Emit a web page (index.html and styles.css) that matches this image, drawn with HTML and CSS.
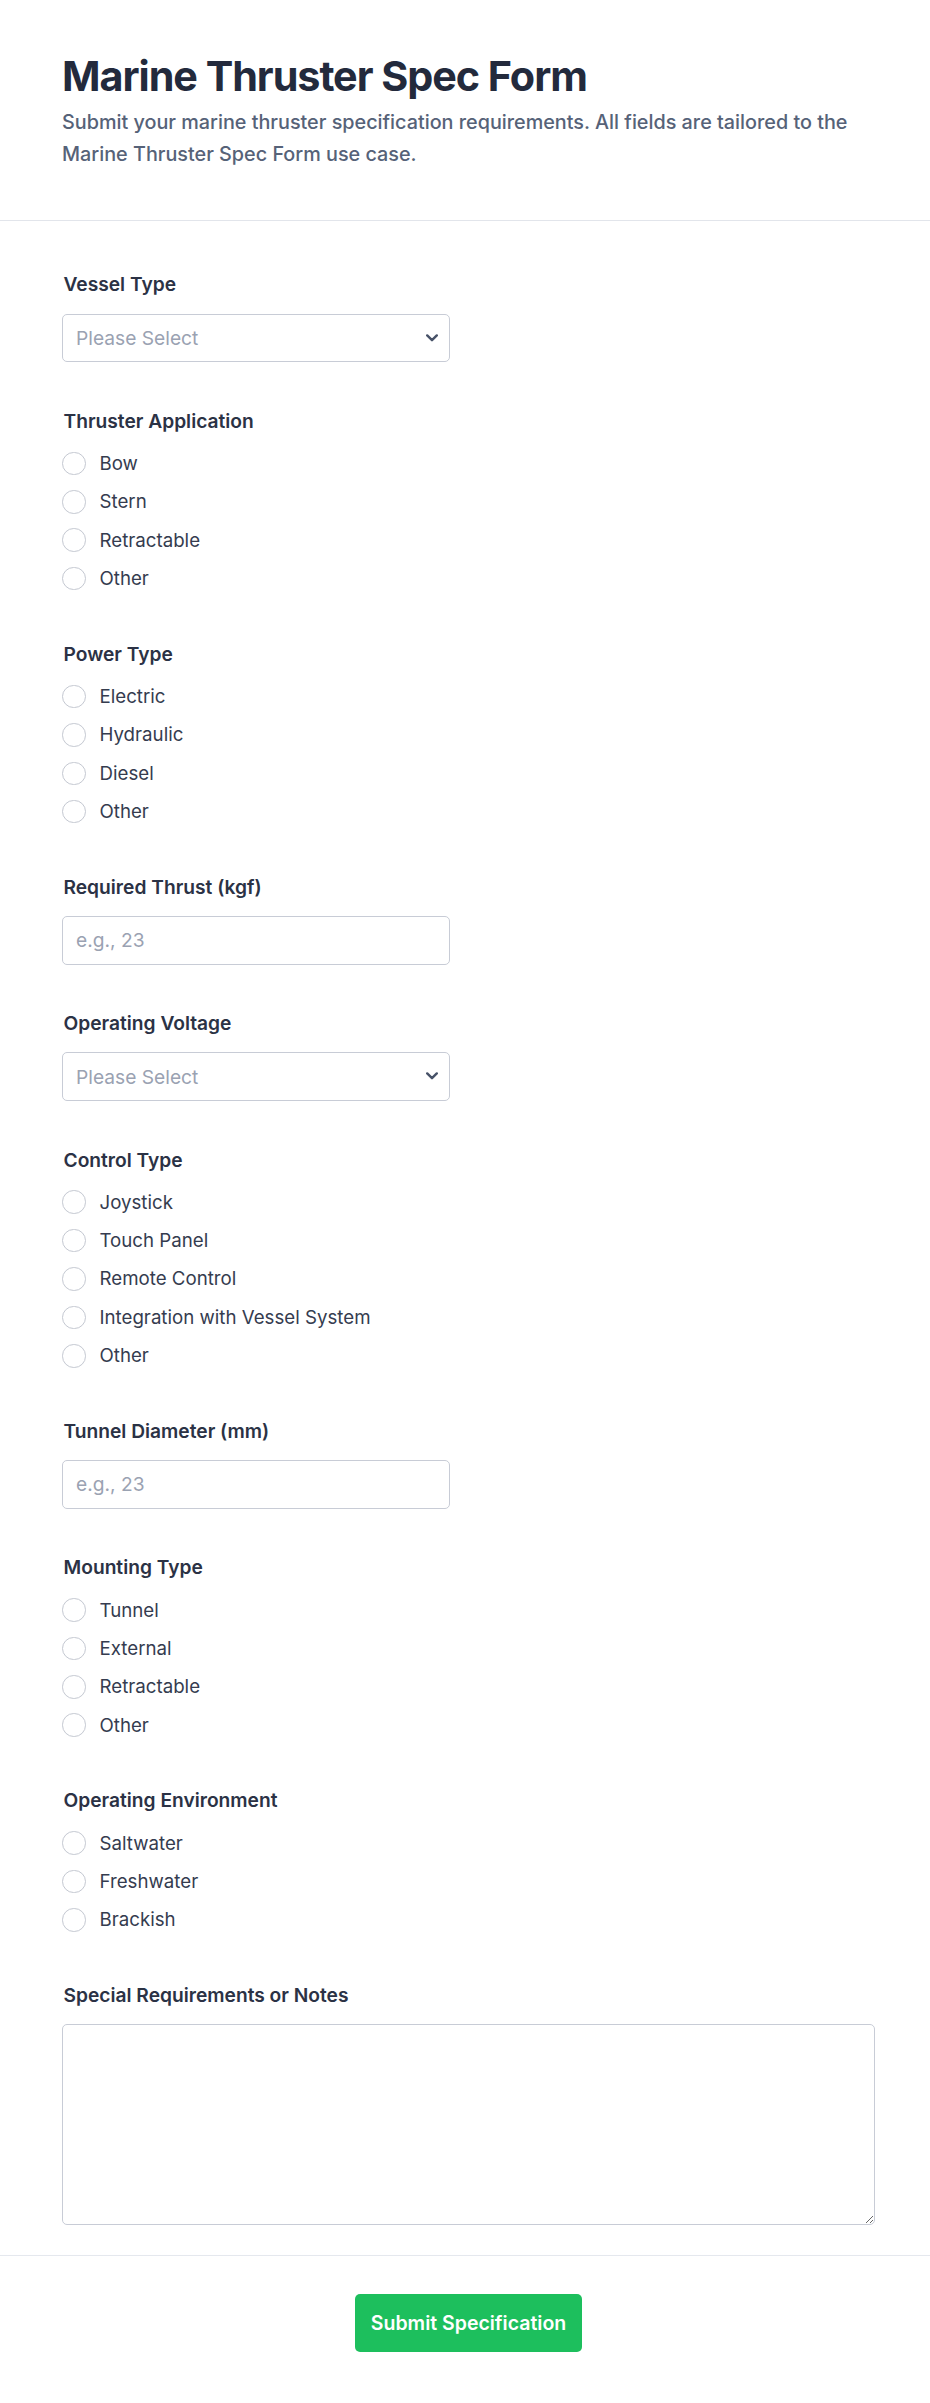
FILE: index.html
```html
<!DOCTYPE html>
<html lang="en">
<head>
<meta charset="utf-8">
<title>Marine Thruster Spec Form</title>
<link rel="stylesheet" href="styles.css">
</head>
<body>
<form class="spec-form">
  <header class="form-head">
    <h1 class="form-title">Marine Thruster Spec Form</h1>
    <p class="form-lede">Submit your marine thruster specification requirements. All fields are tailored to the Marine Thruster Spec Form use case.</p>
  </header>

  <div class="form-body">
    <div class="field">
      <label class="field-label" for="vessel">Vessel Type</label>
      <div class="select-wrap">
        <select id="vessel" class="control select">
          <option>Please Select</option>
        </select>
        <svg class="chevron" viewBox="0 0 12 8" aria-hidden="true"><path d="M1.2 1.4 6 6.2l4.8-4.8"/></svg>
      </div>
    </div>

    <div class="field">
      <span class="field-label">Thruster Application</span>
      <div class="radio-list">
        <label class="radio-row"><input type="radio" name="app"><span>Bow</span></label>
        <label class="radio-row"><input type="radio" name="app"><span>Stern</span></label>
        <label class="radio-row"><input type="radio" name="app"><span>Retractable</span></label>
        <label class="radio-row"><input type="radio" name="app"><span>Other</span></label>
      </div>
    </div>

    <div class="field">
      <span class="field-label">Power Type</span>
      <div class="radio-list">
        <label class="radio-row"><input type="radio" name="power"><span>Electric</span></label>
        <label class="radio-row"><input type="radio" name="power"><span>Hydraulic</span></label>
        <label class="radio-row"><input type="radio" name="power"><span>Diesel</span></label>
        <label class="radio-row"><input type="radio" name="power"><span>Other</span></label>
      </div>
    </div>

    <div class="field">
      <label class="field-label" for="thrust">Required Thrust (kgf)</label>
      <input id="thrust" class="control text-input" type="text" placeholder="e.g., 23">
    </div>

    <div class="field">
      <label class="field-label" for="voltage">Operating Voltage</label>
      <div class="select-wrap">
        <select id="voltage" class="control select">
          <option>Please Select</option>
        </select>
        <svg class="chevron" viewBox="0 0 12 8" aria-hidden="true"><path d="M1.2 1.4 6 6.2l4.8-4.8"/></svg>
      </div>
    </div>

    <div class="field">
      <span class="field-label">Control Type</span>
      <div class="radio-list">
        <label class="radio-row"><input type="radio" name="control"><span>Joystick</span></label>
        <label class="radio-row"><input type="radio" name="control"><span>Touch Panel</span></label>
        <label class="radio-row"><input type="radio" name="control"><span>Remote Control</span></label>
        <label class="radio-row"><input type="radio" name="control"><span>Integration with Vessel System</span></label>
        <label class="radio-row"><input type="radio" name="control"><span>Other</span></label>
      </div>
    </div>

    <div class="field">
      <label class="field-label" for="tunnel">Tunnel Diameter (mm)</label>
      <input id="tunnel" class="control text-input" type="text" placeholder="e.g., 23">
    </div>

    <div class="field">
      <span class="field-label">Mounting Type</span>
      <div class="radio-list">
        <label class="radio-row"><input type="radio" name="mount"><span>Tunnel</span></label>
        <label class="radio-row"><input type="radio" name="mount"><span>External</span></label>
        <label class="radio-row"><input type="radio" name="mount"><span>Retractable</span></label>
        <label class="radio-row"><input type="radio" name="mount"><span>Other</span></label>
      </div>
    </div>

    <div class="field">
      <span class="field-label">Operating Environment</span>
      <div class="radio-list">
        <label class="radio-row"><input type="radio" name="env"><span>Saltwater</span></label>
        <label class="radio-row"><input type="radio" name="env"><span>Freshwater</span></label>
        <label class="radio-row"><input type="radio" name="env"><span>Brackish</span></label>
      </div>
    </div>

    <div class="field">
      <label class="field-label" for="notes">Special Requirements or Notes</label>
      <textarea id="notes" class="control notes"></textarea>
    </div>
  </div>

  <footer class="form-foot">
    <button type="button" class="submit-btn">Submit Specification</button>
  </footer>
</form>
</body>
</html>
```

FILE: styles.css
```css
* {
  box-sizing: border-box;
}

body {
  margin: 0;
  background: #ffffff;
  font-family: Inter, "Noto Sans", "Liberation Sans", sans-serif;
  color: #2b3245;
}

.spec-form {
  display: flex;
  flex-direction: column;
}

/* Header */
.form-head {
  padding: 52px 55px 50px 62px;
  border-bottom: 1px solid #e2e5eb;
}

.form-title {
  margin: 0;
  font-size: 41.3px;
  line-height: 48px;
  font-weight: 700;
  letter-spacing: -1.03px;
  color: #232a3c;
}

.form-lede {
  margin: 5.8px 0 0;
  font-size: 19.8px;
  line-height: 32px;
  font-weight: 500;
  color: #566278;
}

/* Fields */
.form-body {
  display: flex;
  flex-direction: column;
  gap: 44.6px;
  padding: 49.6px 55px 30.5px 62px;
}

.field {
  display: flex;
  flex-direction: column;
  align-items: flex-start;
}

.field-label {
  display: block;
  margin-bottom: 14.4px;
  padding-left: 1.5px;
  font-size: 19.2px;
  line-height: 28.8px;
  font-weight: 600;
  color: #2b3245;
}

.control {
  font-family: inherit;
  font-size: 19.2px;
  color: #2b3245;
  background: #ffffff;
  border: 1.2px solid #c8ccd6;
  border-radius: 5px;
  outline: none;
}

.select-wrap {
  position: relative;
  width: 388px;
}

.select {
  display: block;
  width: 100%;
  height: 48.5px;
  padding: 0 40px 0 13px;
  appearance: none;
  -webkit-appearance: none;
  color: #9aa2b2;
}

.chevron {
  position: absolute;
  right: 12px;
  top: 20px;
  width: 12px;
  height: 8px;
  fill: none;
  stroke: #475268;
  stroke-width: 2.4;
  stroke-linecap: round;
  stroke-linejoin: round;
  pointer-events: none;
}

.text-input {
  width: 388px;
  height: 48.5px;
  padding: 0 13px;
}

.text-input::placeholder {
  color: #9aa2b2;
}

.notes {
  width: 100%;
  height: 200.5px;
  padding: 12px 13px;
  resize: vertical;
}

/* Radio groups */
.radio-list {
  display: flex;
  flex-direction: column;
  gap: 11.4px;
  padding-bottom: 3.2px;
}

.radio-row {
  display: flex;
  align-items: center;
  gap: 14px;
  height: 27px;
  font-size: 18.7px;
  line-height: 27px;
  color: #353c4f;
}

.radio-row input {
  appearance: none;
  -webkit-appearance: none;
  margin: 0;
  width: 23.5px;
  height: 23.5px;
  border: 1.3px solid #c4c8d1;
  border-radius: 50%;
  background: #ffffff;
  flex: none;
}

/* Footer */
.form-foot {
  display: flex;
  justify-content: center;
  padding: 38px 55px 50px 62px;
  border-top: 1px solid #e5e8ee;
}

.submit-btn {
  height: 58px;
  padding: 0 16px;
  border: none;
  border-radius: 5px;
  background: #1dbf5d;
  color: #ffffff;
  font-family: inherit;
  font-size: 19.5px;
  font-weight: 600;
}
```
